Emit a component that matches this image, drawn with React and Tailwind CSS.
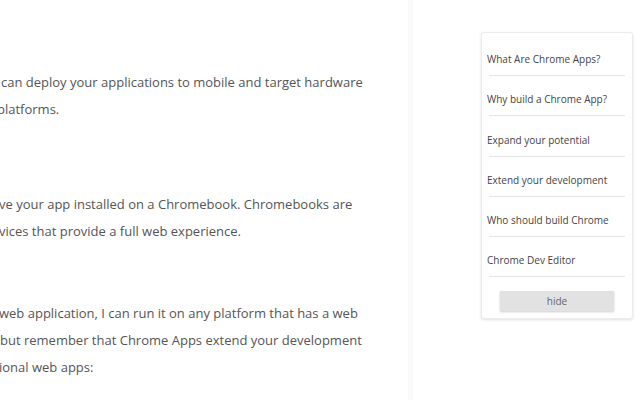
import React from 'react';

const paragraphs = [
  { top: 'mt-[69px]', lines: [
    { text: 'can deploy your applications to mobile and target hardware', ml: 'ml-[1px]' },
    { text: 'platforms.', ml: '-ml-[3px]' },
  ] },
  { top: 'mt-[67px]', lines: [
    { text: 've your app installed on a Chromebook. Chromebooks are', ml: '-ml-[1px]' },
    { text: 'vices that provide a full web experience.', ml: '-ml-[1px]' },
  ] },
  { top: 'mt-[54px]', lines: [
    { text: 'web application, I can run it on any platform that has a web', ml: '-ml-[1px]' },
    { text: 'but remember that Chrome Apps extend your development', ml: 'ml-0' },
    { text: 'ional web apps:', ml: '-ml-[1px]' },
  ] },
];

const tocItems = [
  'What Are Chrome Apps?',
  'Why build a Chrome App?',
  'Expand your potential',
  'Extend your development',
  'Who should build Chrome',
  'Chrome Dev Editor',
];

export default function App() {
  return (
    <div className="w-[640px] h-[400px] overflow-hidden bg-white flex font-['Open_Sans',sans-serif]">
      {/* Article column */}
      <div className="w-[408px] shrink-0 overflow-hidden">
        {paragraphs.map((p, i) => (
          <div key={i} className={p.top}>
            {p.lines.map((l) => (
              <p key={l.text} className={`${l.ml} whitespace-nowrap text-[13px] leading-[27.4px] text-[#555]`}>
                {l.text}
              </p>
            ))}
          </div>
        ))}
      </div>

      {/* Faint gutter */}
      <div className="w-[5px] shrink-0 bg-[#fafafa]" />

      {/* Sidebar */}
      <div className="flex-1 pt-[32px] pl-[68px]">
        <div className="w-[152px] rounded-[3px] bg-white border border-[#ececec] shadow-[0_1px_3px_rgba(0,0,0,0.12)] px-[5px] pt-[3px] pb-[7px]">
          {tocItems.map((item) => (
            <div key={item} className="h-[40.2px] flex items-end pb-[9px] border-b border-[#e4e4e4] mx-[2px]">
              <span className="-ml-[2px] whitespace-nowrap text-[10px] leading-[14px] text-[#444]">{item}</span>
            </div>
          ))}
          <div className="flex justify-center pt-[14px]">
            <button className="w-[114px] h-[20px] bg-[#e2e2e2] shadow-[0_1px_2px_rgba(0,0,0,0.2)] text-[10px] text-[#666] leading-none">
              hide
            </button>
          </div>
        </div>
      </div>
    </div>
  );
}
